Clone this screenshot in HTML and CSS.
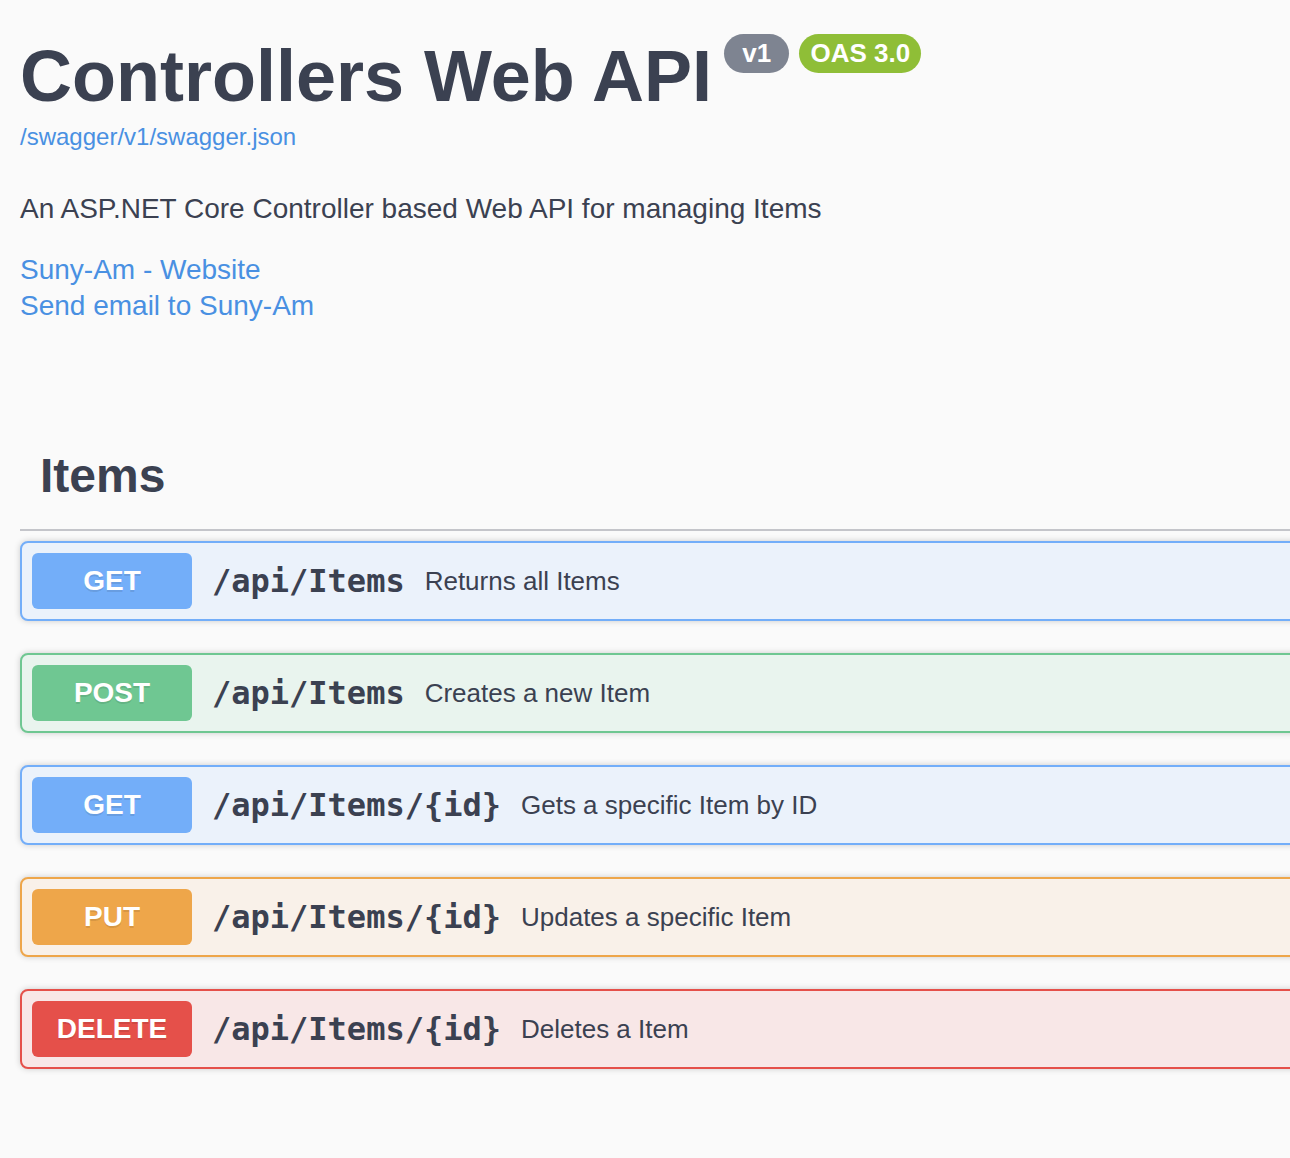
FILE: index.html
```html
<!DOCTYPE html>
<html lang="en">
<head>
<meta charset="utf-8">
<title>Controllers Web API</title>
<link rel="stylesheet" href="styles.css">
</head>
<body>
<div class="wrapper">
  <div class="info">
    <h1 class="title">Controllers Web API<small class="badge badge-version"> v1 </small><small class="badge badge-oas">OAS 3.0</small></h1>
    <a class="base-url" href="#">/swagger/v1/swagger.json</a>
    <p class="description">An ASP.NET Core Controller based Web API for managing Items</p>
    <div class="links">
      <a class="info-link" href="#">Suny-Am - Website</a>
      <a class="info-link" href="#">Send email to Suny-Am</a>
    </div>
  </div>

  <section class="tag-section">
    <h3 class="tag-title">Items</h3>

    <div class="opblock opblock-get">
      <span class="method">GET</span>
      <span class="path">/api/Items</span>
      <span class="summary">Returns all Items</span>
    </div>
    <div class="opblock opblock-post">
      <span class="method">POST</span>
      <span class="path">/api/Items</span>
      <span class="summary">Creates a new Item</span>
    </div>
    <div class="opblock opblock-get">
      <span class="method">GET</span>
      <span class="path">/api/Items/{id}</span>
      <span class="summary">Gets a specific Item by ID</span>
    </div>
    <div class="opblock opblock-put">
      <span class="method">PUT</span>
      <span class="path">/api/Items/{id}</span>
      <span class="summary">Updates a specific Item</span>
    </div>
    <div class="opblock opblock-delete">
      <span class="method">DELETE</span>
      <span class="path">/api/Items/{id}</span>
      <span class="summary">Deletes a Item</span>
    </div>
  </section>
</div>
</body>
</html>
```

FILE: styles.css
```css
html, body {
  margin: 0;
  padding: 0;
  overflow: hidden;
  background: #fafafa;
}

body {
  font-family: "Liberation Sans", Arial, sans-serif;
  color: #3b4151;
}

.wrapper {
  width: 1500px;
  padding: 34px 20px 0;
  box-sizing: border-box;
}

.info {
  display: flex;
  flex-direction: column;
  align-items: flex-start;
}

.title {
  display: flex;
  align-items: flex-start;
  margin: 0;
  font-size: 72px;
  line-height: 84px;
  font-weight: 700;
  color: #3b4151;
}

.badge {
  margin-left: 12px;
  height: 39px;
  padding: 0 11px;
  border-radius: 40px;
  font-size: 26px;
  line-height: 39px;
  font-weight: 700;
  color: #fff;
  white-space: pre;
}

.badge-version {
  background: #7e8491;
}

.badge-oas {
  margin-left: 10px;
  background: #8fbe37;
}

.base-url {
  margin-top: 4px;
  font-size: 24px;
  line-height: 30px;
  color: #4990e2;
  text-decoration: none;
}

.description {
  margin: 39px 0 0;
  font-size: 28px;
  line-height: 36px;
  color: #3b4151;
}

.links {
  margin-top: 25px;
  display: flex;
  flex-direction: column;
  align-items: flex-start;
}

.info-link {
  font-size: 28px;
  line-height: 36px;
  color: #4990e2;
  text-decoration: none;
}

.tag-section {
  margin-top: 104px;
}

.tag-title {
  margin: 0 0 10px;
  padding: 20px 40px 25px 20px;
  font-size: 48px;
  line-height: 56px;
  font-weight: 700;
  color: #3b4151;
  border-bottom: 2px solid #c4c5ca;
}

.opblock {
  display: flex;
  align-items: center;
  margin-bottom: 32px;
  padding: 10px;
  border: 2px solid;
  border-radius: 8px;
  box-shadow: 0 0 6px rgba(0, 0, 0, 0.19);
}

.method {
  flex: none;
  width: 160px;
  padding: 12px 0;
  border-radius: 6px;
  font-size: 28px;
  line-height: 32px;
  font-weight: 700;
  color: #fff;
  text-align: center;
  text-shadow: 0 2px 0 rgba(0, 0, 0, 0.1);
}

.path {
  padding: 0 20px;
  font-family: "DejaVu Sans Mono", "Liberation Mono", monospace;
  font-size: 32px;
  font-weight: 700;
  color: #3b4151;
}

.summary {
  font-size: 26px;
  color: #3b4151;
}

.opblock-get {
  background: #ebf2fb;
  border-color: #73aef9;
}
.opblock-get .method {
  background: #73aef9;
}

.opblock-post {
  background: #e9f4ee;
  border-color: #6fc792;
}
.opblock-post .method {
  background: #6fc792;
}

.opblock-put {
  background: #f9f1e9;
  border-color: #eea64a;
}
.opblock-put .method {
  background: #eea64a;
}

.opblock-delete {
  background: #f8e7e7;
  border-color: #e5504a;
}
.opblock-delete .method {
  background: #e5504a;
}
```
